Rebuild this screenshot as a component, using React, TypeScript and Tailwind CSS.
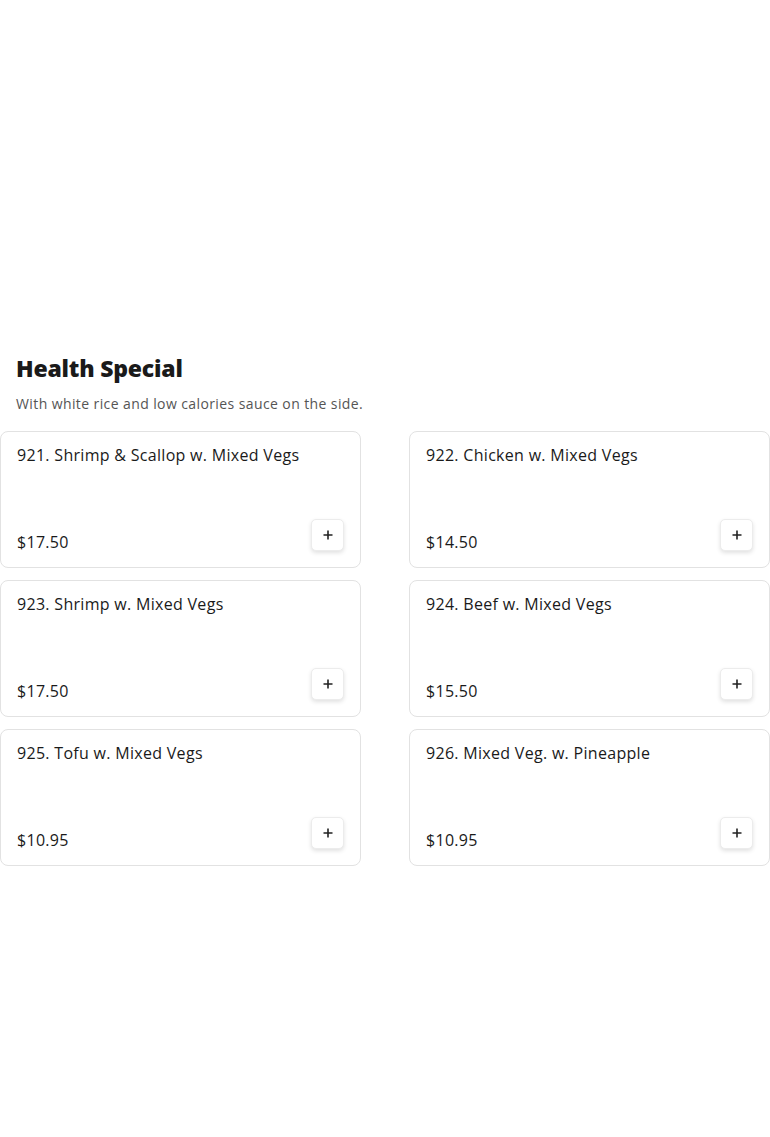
import React from "react";

const items = [
  { name: "921. Shrimp & Scallop w. Mixed Vegs", price: "$17.50" },
  { name: "922. Chicken w. Mixed Vegs", price: "$14.50" },
  { name: "923. Shrimp w. Mixed Vegs", price: "$17.50" },
  { name: "924. Beef w. Mixed Vegs", price: "$15.50" },
  { name: "925. Tofu w. Mixed Vegs", price: "$10.95" },
  { name: "926. Mixed Veg. w. Pineapple", price: "$10.95" },
];

function Plus() {
  return (
    <svg width="12" height="12" viewBox="0 0 12 12" fill="none">
      <path d="M6 1.5v9M1.5 6h9" stroke="#222" strokeWidth="1.6" />
    </svg>
  );
}

export default function App() {
  return (
    <div className="w-[770px] h-[1137px] bg-white pt-[352px] font-['Open_Sans',sans-serif] text-[#1a1a1a]">
      <h2 className="px-4 text-[23px] leading-8 font-extrabold text-[#1a1a1a] tracking-[-0.2px]">
        Health Special
      </h2>
      <p className="px-4 mt-[10px] text-[14px] leading-5 text-[#555] tracking-[0.4px]">
        With white rice and low calories sauce on the side.
      </p>
      <div className="mt-[17px] grid grid-cols-2 gap-x-12 gap-y-3">
        {items.map((it) => (
          <div
            key={it.name}
            className="h-[137px] border border-[#e2e2e2] rounded-lg px-4 pt-3 pb-3 flex flex-col justify-between"
          >
            <div className="text-[16px] leading-[22px] tracking-[0.3px]">{it.name}</div>
            <div className="flex justify-between items-end">
              <div className="text-[16px] leading-[22px] mb-[2px] tracking-[0.3px]">{it.price}</div>
              <button className="w-[33px] h-[32px] mb-1 rounded-[5px] bg-white border border-[#ececec] shadow-[0_2px_4px_rgba(0,0,0,0.12)] flex items-center justify-center">
                <Plus />
              </button>
            </div>
          </div>
        ))}
      </div>
    </div>
  );
}
